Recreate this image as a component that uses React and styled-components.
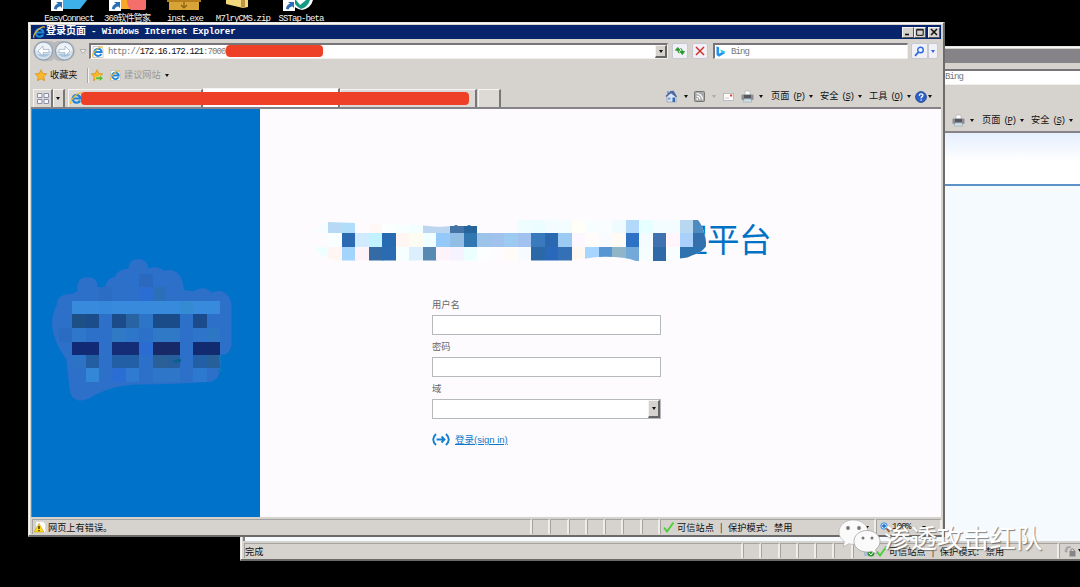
import React from "react";
import styled, { createGlobalStyle } from "styled-components";

const cjk = `"Noto Sans CJK SC", sans-serif`;
const face = "#d6d3ce";

const Global = createGlobalStyle`
  * { box-sizing: border-box; }
  body { margin: 0; background: #000; }
`;

const Desktop = styled.div`
  position: relative;
  width: 1080px;
  height: 587px;
  overflow: hidden;
  background: #000;
  font-family: "Liberation Mono", ${cjk};
  font-size: 9.2px;
  line-height: 12px;
  color: #111;
  white-space: nowrap;
`;

const Shortcuts = styled.div`
  display: grid;
  grid-template-columns: repeat(5, 58px);
  padding-left: 40px;
`;

const Shortcut = styled.div`
  display: flex;
  flex-direction: column;
  align-items: center;
  color: #f2f2f2;
  font-size: 9px;
  letter-spacing: -0.88px;
  svg { display: block; }
  span { margin-top: 2px; }
`;

const Frame = styled.section`
  position: absolute;
  left: ${(p) => p.$x}px;
  top: ${(p) => p.$y}px;
  width: ${(p) => p.$w}px;
  height: ${(p) => p.$h}px;
  display: flex;
  flex-direction: column;
  padding: 2px 2px 1px 2px;
  background: ${face};
  border: 1px solid #e8e6e2;
  border-right: 2px solid #6c6b6a;
  border-bottom: 2px solid #6c6b6a;
  box-shadow: inset 1px 1px #f8f7f5;
`;

const TitleBar = styled.header`
  display: flex;
  align-items: center;
  flex: none;
  height: 14px;
  padding: 0 1px 0 2px;
  background: ${(p) => (p.$inactive ? "#858388" : "#08246b")};
  color: #fff;
  font-weight: bold;
  font-size: 10px;
  em { font-style: normal; font-size: 9.2px; letter-spacing: -0.16px; margin-left: 5px; font-family: "Liberation Mono", monospace; flex: 1; }
`;

const CaptionButton = styled.span`
  display: flex;
  align-items: center;
  justify-content: center;
  width: 12px;
  height: 11px;
  margin-left: ${(p) => p.$gap || 0}px;
  background: ${face};
  border: 1px solid #f5f5f5;
  border-right-color: #555;
  border-bottom-color: #555;
`;

const Row = styled.div`
  display: flex;
  align-items: center;
  flex: none;
  height: ${(p) => p.$h}px;
  padding-left: ${(p) => p.$pl || 0}px;
`;

const Field = styled.div`
  display: flex;
  align-items: center;
  width: ${(p) => p.$w}px;
  height: 16px;
  margin-left: ${(p) => p.$ml || 0}px;
  padding-left: 1px;
  background: #fff;
  border: 1px solid #f0efec;
  border-top: 2px solid #77757a;
  border-left: 2px solid #77757a;
  color: #777;
`;

const Url = styled.span`
  flex: 1;
  display: flex;
  align-items: center;
  margin-left: 4px;
  font-size: 9px;
  letter-spacing: -0.88px;
  b { font-weight: normal; color: #111; }
`;

const Redaction = styled.i`
  width: ${(p) => p.$w}px;
  height: ${(p) => p.$h}px;
  margin-top: ${(p) => p.$mt || 0}px;
  border-radius: 4px;
  background: #ee4026;
`;

const DropButton = styled.span`
  display: flex;
  align-items: center;
  justify-content: center;
  width: 12px;
  height: ${(p) => p.$h || 13}px;
  background: ${face};
  border: 1px solid #f4f3f1;
  border-right: 2px solid #666;
  border-bottom: 2px solid #666;
`;

const SoftButton = styled.span`
  display: flex;
  align-items: center;
  justify-content: center;
  width: ${(p) => p.$w}px;
  height: 16px;
  margin-left: ${(p) => p.$ml || 0}px;
  background: #f0f0f6;
  border: 1px solid #c8c9d2;
  border-radius: 2px;
`;

const Caret = styled.i`
  flex: none;
  width: 0;
  height: 0;
  border: 2.5px solid transparent;
  border-top: 3px solid ${(p) => p.$c || "#111"};
  border-bottom: 0;
`;

const Slot = styled.span`
  display: flex;
  align-items: center;
  flex: none;
  width: ${(p) => p.$w}px;
  color: ${(p) => p.$c || "#111"};
  svg { display: block; flex: none; }
`;

const MenuText = styled.span`
  display: flex;
  align-items: center;
  padding-top: 1px;
`;

const Paren = styled.span`
  margin: 0 4px 0 3px;
  font-size: 9px;
  letter-spacing: -1.3px;
  u { text-decoration-thickness: 1px; }
`;

const Divider = styled.i`
  width: 2px;
  height: 15px;
  background: #aaa8a5;
  border-right: 1px solid #f4f3f1;
`;

const TabStrip = styled.div`
  display: flex;
  align-items: flex-end;
  flex: none;
  height: 19px;
  padding-left: 2px;
`;

const Tab = styled.div`
  display: flex;
  align-items: center;
  width: ${(p) => p.$w}px;
  height: ${(p) => (p.$active ? 19 : 18)}px;
  padding-left: ${(p) => p.$pl || 0}px;
  background: ${(p) => (p.$active ? "#fff" : "#dddad6")};
  border-top: 1px solid #f5f4f2;
  border-left: 1px solid #f5f4f2;
  border-right: 2px solid #777;
`;

const TabCover = styled.div`
  position: absolute;
  left: 52px;
  top: 69px;
  display: flex;
`;

const Page = styled.main`
  display: flex;
  flex: none;
  height: 410px;
  border-top: 2px solid #858387;
  border-left: 1px solid #858387;
  background: #fefbff;
`;

const Side = styled.aside`
  width: 228px;
  padding: 141px 0 0 8px;
  background: #0072c9;
  svg { display: block; }
`;

const Login = styled.div`
  flex: 1;
  padding: 106px 0 0 54px;
`;

const Heading = styled.h1`
  position: relative;
  display: flex;
  align-items: center;
  justify-content: flex-end;
  width: 457px;
  height: 48px;
  margin: 0;
  padding-bottom: 2px;
  font: 400 32.5px/46px ${cjk};
  letter-spacing: -0.5px;
  color: #0072c6;
  svg { position: absolute; left: 0; top: 0; }
`;

const Form = styled.form`
  width: 229px;
  margin: 35px 0 0 118px;
  font: 9.3px/13px "Liberation Sans", ${cjk};
  color: #666;
`;

const FormLabel = styled.label`
  display: block;
  height: 17px;
  padding-top: 1px;
`;

const Box = styled.div`
  display: flex;
  justify-content: flex-end;
  height: 20px;
  margin-bottom: 5px;
  background: #fff;
  border: 1px solid #b5b9bc;
`;

const SignIn = styled.div`
  display: flex;
  align-items: center;
  gap: 5px;
  margin-top: 14px;
  font-size: 9.5px;
  a { color: #0d78c8; text-decoration: underline; }
`;

const StatusBar = styled.footer`
  display: flex;
  align-items: center;
  flex: none;
  height: ${(p) => p.$h}px;
  padding: 1px 0 0 1px;
`;

const StatusCell = styled.div`
  display: flex;
  align-items: center;
  flex: none;
  width: ${(p) => p.$w}px;
  height: 15px;
  padding-left: ${(p) => p.$pl || 0}px;
  border-top: 1px solid #a5a3a0;
  border-left: 1px solid #a5a3a0;
  border-right: 2px solid #efedea;
  font-family: ${cjk};
  font-size: 9.2px;
  svg { display: block; flex: none; }
`;

const Zoom = styled.span`
  margin-left: 2px;
  width: 30px;
  font: 9px "Liberation Mono", monospace;
  letter-spacing: -0.8px;
`;

const BackPage = styled.div`
  flex: 1;
  display: flex;
  flex-direction: column;
  border-top: 2px solid #858387;
  border-left: 2px solid #858387;
  background: #f5faff;
  &::before {
    content: "";
    height: 51px;
    background: linear-gradient(#e5effd, #fff 55%);
    border-bottom: 2px solid #5b93c8;
  }
`;

const Watermark = styled.div`
  position: absolute;
  left: 837px;
  top: 516px;
  display: flex;
  align-items: center;
  gap: 3px;
  font: 400 26.4px/40px ${cjk};
  color: #fff;
  text-shadow: 1px 1px 1px rgba(90, 90, 90, 0.75);
`;

const IeIcon = ({ size = 12, page }) => (
  <svg width={size} height={size} viewBox="0 0 12 12">
    {page && <path d="M1 .5h7.500L11 3v8.500H1z" fill="#fff" stroke="#aaa" strokeWidth=".6" />}
    <path d="M9.300 7.800A3.600 3.600 0 1 1 9.600 6H3.200" fill="none" stroke="#1d86db" strokeWidth="2" />
    <path d="M1 11C-1 8 8-1 11 1.200" fill="none" stroke="#efb52c" strokeWidth="1.100" />
  </svg>
);

const NavIcon = () => (
  <svg width="54" height="22" viewBox="0 0 54 22">
    <path d="M10 1Q20 0 21 3Q23 0 32 1A10 10 0 0 1 32 21Q23 22 21 18Q20 22 10 21A10 10 0 0 1 10 1Z" fill="#b9b9bb" />
    {[10.5, 31.5].map((x) => (
      <g key={x}>
        <circle cx={x} cy="11" r="9" fill="#d6e0eb" stroke="#8799b0" />
        <path d={`M${x - 8} 11a8 8 0 0 1 16 0z`} fill="#eef2f7" />
        <path d={`M${x - 6} 14a7 6 0 0 0 12 0z`} fill="#a9c7e2" />
      </g>
    ))}
    <path d="M5 11l5-5v3.400h6v3.200h-6V16zM37 11l-5-5v3.400h-6v3.200h6V16z" fill="#fff" stroke="#8ba0b8" strokeWidth=".6" />
    <path d="M47 9.500h6l-3 4z" fill="#eee" stroke="#999" strokeWidth=".7" />
  </svg>
);

const Star = ({ plus }) => (
  <svg width="13" height="13" viewBox="0 0 13 13">
    <path d="M6 .8l1.700 3.600 4 .5-2.900 2.800.7 4L6 9.800l-3.500 1.900.7-4L.3 4.900l4-.5z" fill="#fbb829" stroke="#d98a10" strokeWidth=".7" />
    {plus && <path d="M4.500 8h4V6l4 3.300-4 3.200v-2h-4z" fill="#5dbb3c" stroke="#fff" strokeWidth=".4" />}
  </svg>
);

const Printer = () => (
  <svg width="13" height="13" viewBox="0 0 13 13">
    <path d="M4 1h5v4H4z" fill="#fff" stroke="#aaa" strokeWidth=".6" />
    <rect x=".5" y="4.500" width="12" height="5.500" rx="1" fill="#8b8e94" />
    <path d="M3 5h7v3H3z" fill="#55585e" />
    <path d="M3 9h7l.7 3H2.300z" fill="#c8e3ef" stroke="#888" strokeWidth=".4" />
  </svg>
);

const HomeIcon = () => (
  <svg width="13" height="13" viewBox="0 0 13 13">
    <path d="M2 6v6h9V6L6.500 2z" fill="#dce6f4" stroke="#7b8fb0" strokeWidth=".6" />
    <path d="M2 1h2v3H2z" fill="#8ea4cc" />
    <path d="M.5 6L5.500 1l3-.2 3.500 5.700-1 .8-5-4L1.500 7z" fill="#4a6aa6" />
    <path d="M7.500 7.500H10V12H7.500z" fill="#3569b5" />
    <path d="M3 7.500h2.500v2.300H3z" fill="#7ca1d8" />
  </svg>
);

const RssIcon = () => (
  <svg width="11" height="11" viewBox="0 0 11 11">
    <rect x=".5" y=".5" width="10" height="10" rx="1" fill="#a9a9a9" stroke="#757575" />
    <path d="M2.500 2.500a6 6 0 0 1 6 6M2.500 5.200a3.300 3.300 0 0 1 3.300 3.300" fill="none" stroke="#fff" strokeWidth="1.200" />
    <circle cx="3.200" cy="7.900" r=".9" fill="#fff" />
  </svg>
);

const MailIcon = () => (
  <svg width="11" height="8" viewBox="0 0 11 8">
    <rect x=".4" y=".4" width="10.200" height="7.200" fill="#fbfbfb" stroke="#aaa" strokeWidth=".7" />
    <rect x="7" y="1.500" width="2.200" height="2" fill="#dd4436" />
    <path d="M2 5h4" stroke="#ccc" />
  </svg>
);

const HelpIcon = () => (
  <svg width="12" height="12" viewBox="0 0 12 12">
    <circle cx="6" cy="6" r="5.400" fill="#2e62c8" stroke="#173c88" strokeWidth=".8" />
    <path d="M4.300 4.700c0-2.500 3.600-2.400 3.600-.3C7.900 5.600 6.100 5.700 6.100 7.200" fill="none" stroke="#fff" strokeWidth="1.300" />
    <circle cx="6.100" cy="9" r=".8" fill="#fff" />
  </svg>
);

const BingIcon = () => (
  <svg width="9" height="11" viewBox="0 0 9 11">
    <path d="M.5 .3L3 1.200v6.300L8.500 5v2.500L3 10.800.5 9z" fill="#2291ef" />
    <path d="M4 3.500l4.500 1.700v2.600L5.300 6z" fill="#2ac3e9" />
  </svg>
);

const Search = () => (
  <svg width="11" height="11" viewBox="0 0 11 11">
    <circle cx="6.500" cy="4" r="2.800" fill="#eef5ff" stroke="#2d6ae0" strokeWidth="1.400" />
    <path d="M4.500 6.200L1 9.800" stroke="#2d6ae0" strokeWidth="1.800" />
  </svg>
);

const Check = () => (
  <svg width="12" height="12" viewBox="0 0 12 12">
    <path d="M1 6.500l3 4L10.500 1.500" fill="none" stroke="#49cf38" strokeWidth="1.900" />
  </svg>
);

const Warning = () => (
  <svg width="12" height="12" viewBox="0 0 12 12">
    <path d="M2 .5h7L11.500 3v8.500H2z" fill="#fff" stroke="#ccc" strokeWidth=".5" />
    <path d="M5 2.500L9.800 11H.2z" fill="#ffd920" stroke="#c99a00" strokeWidth=".6" />
    <path d="M5 5v3M5 9v1.200" stroke="#111" strokeWidth="1.200" />
  </svg>
);

const ShortcutBadge = () => (
  <g>
    <path d="M11 0h12v11H11z" fill="#fff" />
    <path d="M14 9q0-4 4-5.500L16 2h6v6l-1.800-1.700Q17 7 16.500 9.500z" fill="#2a6eb5" />
  </g>
);

const desktopItems = [
  ["EasyConnect", <><path d="M23 0h24l-7 9H23z" fill="#3db0ea" /><ShortcutBadge /></>],
  ["360软件管家", <><path d="M23 0h12v9H23z" fill="#f9a826" /><path d="M29 0h19v8q0 2-3 2H33q-4-3-4-10z" fill="#f46e6b" /><ShortcutBadge /></>],
  ["inst.exe", <><path d="M13 0h30v10H13z" fill="#d9a437" /><path d="M11 0h34v2H11z" fill="#b57f1d" /><path d="M28 2v5M25 5l3 3 3-3" stroke="#8b5f10" strokeWidth="1.200" fill="none" /></>],
  ["M7lryCMS.zip", <><path d="M12 0h22v7l-5 1L12 4z" fill="#f3d77c" /><path d="M27 0h4v8l-4-1z" fill="#bd9545" /></>],
  ["SSTap-beta", <><path d="M20 0h21q-2 8-11 10Q22 8 20 4z" fill="#fff" /><path d="M21 0h17q-2 7-9 9-6-3-8-9z" fill="#159b84" /><path d="M24 0l4 5 6-5z" fill="#fff" /><ShortcutBadge /></>],
];

const S = 13.52;
const bannerRows = [
  "#f5feff #b8d9f5 #b0defa #fefbff #fff8f5 #fbfffe #f8ffff #f2fffe #bdd6f0 #bdd6f0 #4474a6 #28649c - - - #effdff #ebfdff #f3fcff #f3fcff #fffff8 #f8feff #fafdff #f0fbff #b3d9fa #e6ffff #f3fdff #f3fdff #b8d8f2 #4e8bbf",
  "- #f8fffe #2c6bb2 #d0ebff #c0f3ff #276bb0 #fff6f3 #fdfcf3 #f0ffff #95c9fa #92bde5 #3178b0 #9cc3e8 #a0c2ec #9dcaf0 #a1c1ee #387abb #2a69af #9bcaf2 #fdf8ff #fffcfa #f8fbff #fffaf3 #2d72c5 #f5fcff #4072b2 #fff5fb #a8d0fa #3370ad",
  "#edffff #fff6f3 #a3d4fd #fff3fa #356ba5 #2a6bb2 #f5ffff #dceffe #5889b2 #fff3fb #f4f3ff #ebffff #fcfeff #fffcff #fffcf8 #f5fbff #2a68a8 #2a68bc #3370b5 #fff8f0 #a6d6ff #5896d3 #8fb5c8 #73a9d8 #f5fdff #2f69a8 #f8feff #2e72b0 #2e72b0",
].map((r) => r.split(" "));
const bannerY = [220, 233, 246.7, 260.5];

const Banner = () => (
  <svg width="396" height="48" viewBox="314 215 396 48">
    <defs>
      <clipPath id="banner">
        <path d="M328 222L355 223L420 225Q440 228 450 226H477V231H517V220H698Q703 226 704.500 235Q707 242 705.500 247Q701 253 693 255Q688 258 680 258.500V261H636Q622 256 598 257Q588 258 572 260.500H340Q322 258 315 250V235Q317 225 328 222Z" />
      </clipPath>
    </defs>
    <g clipPath="url(#banner)" shapeRendering="crispEdges">
      <rect x="314" y="219" width="391" height="42" fill="#fefbff" />
      {bannerRows.map((row, j) =>
        row.map((c, i) =>
          c === "-" ? null : (
            <rect key={`${j}-${i}`} x={314.8 + i * S} y={bannerY[j]} width={S + 0.3} height={bannerY[j + 1] - bannerY[j]} fill={c} />
          )
        )
      )}
    </g>
    <path d="M454 226q2-2 4 0M467 226q2-2 4 0" fill="#2c6ba5" />
  </svg>
);

const logoCells = [
  [297, 72, 42, 40, "#2b69bf"], [258, 72, 39, 40, "#2b71cc"], [339, 72, 41, 40, "#2b70cb"],
  [177, 112, 40, 41, "#2b6dc4"], [297, 112, 42, 41, "#2a6ed3"], [339, 112, 40, 41, "#2b6fb8"],
  [96, 153, 444, 39, "#378adc"], [177, 153, 40, 39, "#3588dc"], [420, 153, 40, 39, "#358bd2"],
  [96, 192, 41, 42, "#1d5186"], [137, 192, 40, 42, "#1c4c8a"], [217, 192, 41, 42, "#1c4b89"], [258, 192, 39, 42, "#2864a3"], [297, 192, 42, 42, "#2d75c6"], [339, 192, 81, 42, "#1b4c8a"], [460, 192, 41, 42, "#1b4b8a"],
  [56, 234, 40, 41, "#2b6cc3"], [96, 234, 41, 41, "#2f77cb"], [217, 234, 41, 41, "#2f79c5"], [258, 234, 39, 41, "#2e76c9"], [339, 234, 81, 41, "#2f79c7"], [460, 234, 41, 41, "#2d74ca"], [501, 234, 39, 41, "#2d76c4"],
  [96, 275, 81, 39, "#122a76"], [217, 275, 80, 39, "#142d76"], [297, 275, 42, 39, "#2b6cd3"], [339, 275, 81, 39, "#182968"], [460, 275, 80, 39, "#122b70"],
  [96, 314, 41, 41, "#2c72c5"], [137, 314, 40, 41, "#235ea2"], [217, 314, 80, 41, "#235fa4"], [339, 314, 41, 41, "#2a5f97"], [380, 314, 40, 41, "#265e9e"], [460, 314, 41, 41, "#235fa5"], [501, 314, 39, 41, "#275f98"],
  [137, 355, 40, 41, "#3487d7"], [217, 355, 41, 41, "#2b6ed3"], [258, 355, 39, 41, "#2f7bd1"], [339, 355, 81, 41, "#2d76c8"], [460, 355, 41, 41, "#2d79d0"],
];

const LogoMosaic = () => (
  <svg width="210" height="160" viewBox="0 0 630 480">
    <path d="M50 165Q52 132 90 132Q105 130 112 122Q108 82 143 82Q172 82 173 111H195Q200 84 225 80Q232 58 264 56Q268 27 294 27Q322 27 326 56Q350 44 373 62Q425 50 432 120L461 124Q490 104 516 128Q545 114 565 138Q575 150 575 180V285Q570 315 542 315V355Q535 396 505 396L390 402L275 404Q210 410 165 435Q140 452 118 452Q90 448 88 415L79 328Q40 275 36 225Q36 190 50 165Z" fill="#2c70ca" />
    <g shapeRendering="crispEdges">
      {logoCells.map(([x, y, w, h, c], i) => (
        <rect key={i} x={x} y={y} width={w} height={h} fill={c} />
      ))}
    </g>
    <path d="M398 335q5-8 25-8v8q-12 6-25 0z" fill="#07618f" />
    <path d="M537 315h6v18l-6 5zM532 364l14-12v16z" fill="#087bb5" />
  </svg>
);

const WeChat = () => (
  <svg width="44" height="42" viewBox="0 0 44 42">
    <path d="M16 4C8 4 2 9.500 2 16c0 4 2 7.300 5.500 9.600L6 31l5.600-3.200q2.500.6 5.400.5C25 28 31 22.500 31 16S25 4 16 4z" fill="#fafafa" stroke="#aaa" strokeWidth=".6" />
    <path d="M30 14.500c-7.500 0-13 4.800-13 10.800s5.500 10.700 13 10.700q2.400 0 4.500-.6L40 38l-1.400-4.500C41.500 31.500 43 28.600 43 25.300c0-6-5.500-10.800-13-10.800z" fill="#fafafa" stroke="#999" strokeWidth=".7" />
    <g fill="#777"><circle cx="11" cy="12" r="1.900" /><circle cx="22" cy="12" r="1.900" /><circle cx="26" cy="22" r="1.500" /><circle cx="35" cy="22" r="1.500" /></g>
  </svg>
);

const Menu = ({ w, text, k }) => (
  <Slot $w={w}>
    <MenuText>
      {text}
      <Paren>(<u>{k}</u>)</Paren>
    </MenuText>
    <Caret />
  </Slot>
);

const Blank = ({ n }) => Array.from({ length: n }, (_, i) => <StatusCell key={i} $w={18.3} />);

const Trust = () => (
  <Slot $w={122}>
    <Slot $w={43}>可信站点</Slot>
    <Slot $w={8}>|</Slot>
    <Slot $w={46}>保护模式:</Slot>
    禁用
  </Slot>
);

const BackWindow = () => (
  <Frame $x={240} $y={46} $w={860} $h={515}>
    <TitleBar $inactive />
    <Row $h={27} $pl={684}>
      <Field $w={200}><Slot $w={11} /><Url>Bing</Url></Field>
    </Row>
    <Row $h={20} />
    <Row $h={21} $pl={709}>
      <Slot $w={18}><Printer /></Slot>
      <Slot $w={12}><Caret /></Slot>
      <Menu w={49} text="页面" k="P" />
      <Menu w={49} text="安全" k="S" />
    </Row>
    <BackPage />
    <StatusBar $h={17}>
      <StatusCell $w={499}>完成</StatusCell>
      <Blank n={6} />
      <StatusCell $w={206} $pl={9}>
        <svg width="13" height="12" viewBox="0 0 13 12">
          <path d="M1 2h6v9H1z" fill="#aebbd0" />
          <circle cx="8" cy="8" r="3.500" fill="#2a9a30" />
          <path d="M6 8l2 2 3-4" stroke="#fff" fill="none" />
        </svg>
        <Slot $w={13}><Check /></Slot>
        <Trust />
      </StatusCell>
      <StatusCell $w={40} $pl={4}>
        <Slot $w={14}>
          <svg width="12" height="12" viewBox="0 0 12 12">
            <path d="M0 6l2.500 2L4 5 3 5.500Q4 2 7 3.500V1.500Q1 0 1.200 5.500z" fill="#a5a5a8" />
            <rect x="5.500" y="6" width="6" height="5.500" fill="#85868a" />
            <path d="M6.800 6V4.800q1.700-2 3.400 0V6" fill="none" stroke="#85868a" />
          </svg>
        </Slot>
        <Caret />
      </StatusCell>
    </StatusBar>
  </Frame>
);

const MainWindow = () => (
  <Frame $x={28} $y={22} $w={917} $h={515}>
    <TitleBar>
      <IeIcon size={13} />
      登录页面
      <em>- Windows Internet Explorer</em>
      <CaptionButton><svg width="8" height="8"><path d="M1 6.500h4" stroke="#111" strokeWidth="1.600" /></svg></CaptionButton>
      <CaptionButton><svg width="8" height="8"><path d="M.7 1.300h6.500v6h-6.500zM.7 2h6.500" fill="none" stroke="#111" /></svg></CaptionButton>
      <CaptionButton $gap={2}><svg width="8" height="8"><path d="M1 1l6 6M7 1L1 7" stroke="#111" strokeWidth="1.500" /></svg></CaptionButton>
    </TitleBar>
    <Row $h={24} $pl={2}>
      <NavIcon />
      <Field $w={579} $ml={2}>
        <IeIcon page />
        <Url>
          http://<b>172.16.172.121</b>:7000
          <Redaction $w={97} $h={12} $mt={-1} />
        </Url>
        <DropButton><Caret /></DropButton>
      </Field>
      <SoftButton $w={16} $ml={4}>
        <svg width="12" height="10" viewBox="0 0 12 10">
          <path d="M5.500 7Q3.800 7 3.800 4M1.500 4.200L3.800 1.500 6 4.200zM6.500 2.500Q8.300 2.500 8.300 6M6 5.500L8.300 8.500 10.500 5.500z" fill="#2c9b2c" stroke="#2c9b2c" />
        </svg>
      </SoftButton>
      <SoftButton $w={16} $ml={4}>
        <svg width="10" height="10"><path d="M1 1l8 8M9 1L1 9" stroke="#d2322c" strokeWidth="1.500" /></svg>
      </SoftButton>
      <Field $w={195} $ml={5}><Slot $w={11}><BingIcon /></Slot><Url>Bing</Url></Field>
      <SoftButton $w={17} $ml={3}><Search /></SoftButton>
      <SoftButton $w={10}><Caret $c="#2d6ae0" /></SoftButton>
    </Row>
    <Row $h={25} $pl={4}>
      <Slot $w={15}><Star /></Slot>
      <Slot $w={37}>收藏夹</Slot>
      <Divider />
      <Slot $w={2} />
      <Slot $w={19}><Star plus /></Slot>
      <Slot $w={14}><IeIcon page size={11} /></Slot>
      <Slot $w={41} $c="#999">建议网站</Slot>
      <Caret />
    </Row>
    <TabStrip>
      <Tab $w={20} $pl={3}>
        <svg width="12" height="11" viewBox="0 0 12 11">
          <path d="M.5.5h4.500v4H.5zM7 .5h4.500v4H7zM.5 6.500h4.500v4H.5zM7 6.500h4.500v4H7z" fill="#f4f5fb" stroke="#8b8fa8" />
        </svg>
      </Tab>
      <Tab $w={12} $pl={2}><Caret /></Tab>
      <Slot $w={3} />
      <Tab $w={135} $pl={1}><IeIcon size={13} /></Tab>
      <Tab $w={137} $active />
      <Tab $w={137} />
      <Slot $w={1} />
      <Tab $w={23} />
      <Slot $w={164} />
      <Row $h={21}>
        <Slot $w={19}><HomeIcon /></Slot>
        <Slot $w={10}><Caret /></Slot>
        <Slot $w={18}><RssIcon /></Slot>
        <Slot $w={11}><Caret $c="#aaa" /></Slot>
        <Slot $w={18}><MailIcon /></Slot>
        <Slot $w={18}><Printer /></Slot>
        <Slot $w={12}><Caret /></Slot>
        <Menu w={49} text="页面" k="P" />
        <Menu w={49} text="安全" k="S" />
        <Menu w={46} text="工具" k="O" />
        <Slot $w={13}><HelpIcon /></Slot>
        <Caret />
      </Row>
    </TabStrip>
    <TabCover><Redaction $w={388} $h={13} /></TabCover>
    <Page>
      <Side><LogoMosaic /></Side>
      <Login>
        <Heading>理平台<Banner /></Heading>
        <Form>
          <FormLabel>用户名</FormLabel>
          <Box />
          <FormLabel>密码</FormLabel>
          <Box />
          <FormLabel>域</FormLabel>
          <Box><DropButton $h={18}><Caret /></DropButton></Box>
          <SignIn>
            <svg width="18" height="13" viewBox="0 0 18 13">
              <path d="M4 1Q-1.500 6.500 4 12M14 1q5.500 5.500 0 11" fill="none" stroke="#1680cf" strokeWidth="1.900" />
              <path d="M4.500 6.500h8M9.500 3.500l3 3-3 3" fill="none" stroke="#1680cf" strokeWidth="1.900" />
            </svg>
            <a>登录(sign in)</a>
          </SignIn>
        </Form>
      </Login>
    </Page>
    <StatusBar $h={18}>
      <StatusCell $w={500} $pl={1}>
        <Slot $w={14}><Warning /></Slot>网页上有错误。
      </StatusCell>
      <Blank n={7} />
      <StatusCell $w={216} $pl={2}>
        <Slot $w={14}><Check /></Slot>
        <Trust />
        <Slot $w={66} />
        <Caret />
      </StatusCell>
      <StatusCell $w={66} $pl={3}>
        <svg width="10" height="11" viewBox="0 0 10 11">
          <circle cx="4" cy="4" r="3.200" fill="#d6ebff" stroke="#3485dc" />
          <path d="M4 2v4M2 4h4" stroke="#1767c8" strokeWidth="1.300" />
          <path d="M6.500 6.500L9.500 10" stroke="#9c5a28" strokeWidth="1.800" />
        </svg>
        <Zoom>100%</Zoom>
        <Caret />
      </StatusCell>
    </StatusBar>
  </Frame>
);

export default function App() {
  return (
    <>
      <Global />
      <Desktop>
        <Shortcuts>
          {desktopItems.map(([name, art]) => (
            <Shortcut key={name}>
              <svg width="58" height="11" viewBox="0 0 58 11">{art}</svg>
              <span>{name}</span>
            </Shortcut>
          ))}
        </Shortcuts>
        <BackWindow />
        <MainWindow />
        <Watermark><WeChat />渗透攻击红队</Watermark>
      </Desktop>
    </>
  );
}
